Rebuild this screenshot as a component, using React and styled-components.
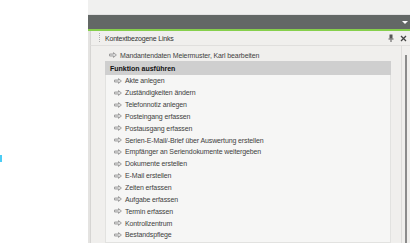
import React from 'react';
import styled, { createGlobalStyle } from 'styled-components';

const GlobalStyle = createGlobalStyle`
  html, body {
    margin: 0;
    padding: 0;
    background: #ffffff;
    overflow: hidden;
  }
  body {
    font-family: "Liberation Sans", Arial, sans-serif;
  }
`;

const Page = styled.div`
  display: flex;
  width: 410px;
  height: 243px;
`;

const LeftBlank = styled.div`
  width: 88px;
  flex: none;
  padding-top: 155px;
  box-sizing: border-box;
`;

const Marker = styled.div`
  width: 2px;
  height: 7px;
  background: #4ccdf5;
`;

const Dock = styled.div`
  flex: 1;
  display: flex;
  flex-direction: column;
  min-width: 0;
`;

const TopStrip = styled.div`
  height: 15px;
  background: #f0f0ef;
  border-bottom: 1px solid #e2e2e2;
  box-sizing: border-box;
`;

const TitleBar = styled.div`
  height: 14px;
  background: #636866;
  display: flex;
  align-items: center;
  justify-content: flex-end;
  padding-right: 2px;
`;

const DropArrow = styled.div`
  width: 0;
  height: 0;
  border-left: 3px solid transparent;
  border-right: 3px solid transparent;
  border-top: 3px solid #ffffff;
  margin-top: 1px;
`;

const GreenLine = styled.div`
  height: 2px;
  background: #86cf4c;
`;

const Panel = styled.div`
  flex: 1;
  display: flex;
  flex-direction: column;
  background: #f0efed;
  border-left: 2px solid #e4e3e1;
  min-height: 0;
`;

const PanelHeader = styled.div`
  height: 14px;
  display: flex;
  align-items: center;
  padding-left: 8px;
  padding-right: 3px;
  border-bottom: 1px solid #e0dfdd;
  border-left: 1px solid #d6d5d3;
`;

const Grip = styled.div`
  width: 1px;
  height: 10px;
  margin-right: 5px;
  background-image: linear-gradient(#b0b0b0 50%, transparent 50%);
  background-size: 1px 2px;
`;

const HeaderTitle = styled.div`
  flex: 1;
  font-size: 7px;
  color: #333333;
  letter-spacing: -0.2px;
  padding-top: 1px;
`;

const HeaderIcon = styled.div`
  width: 8px;
  height: 8px;
  margin-left: 4px;
  display: flex;
  align-items: center;
  justify-content: center;
`;

const Body = styled.div`
  flex: 1;
  display: flex;
  min-height: 0;
  border-left: 1px solid #d6d5d3;
`;

const Content = styled.div`
  flex: 1;
  padding-left: 16px;
  padding-top: 3px;
  padding-right: 10px;
  display: flex;
  flex-direction: column;
  min-width: 0;
`;

const ScrollTrack = styled.div`
  width: 9px;
  flex: none;
  border-left: 1px solid #dedddb;
  padding-top: 9px;
  display: flex;
  justify-content: flex-end;
  padding-right: 3px;
  box-sizing: border-box;
`;

const ScrollThumb = styled.div`
  width: 2px;
  flex: none;
  height: 100%;
  background: #8c8c8c;
`;

const LinkRow = styled.div`
  display: flex;
  align-items: center;
  height: 12px;
  padding-left: ${p => p.$indent || 0}px;
  font-size: 7px;
  color: #3f3f3f;
  letter-spacing: -0.12px;
  white-space: nowrap;
`;

const ArrowWrap = styled.span`
  width: 8px;
  height: 6px;
  margin-right: 3px;
  display: inline-flex;
`;

const Group = styled.div`
  margin-left: -2px;
  display: flex;
  flex-direction: column;
  flex: 1;
`;

const GroupHeader = styled.div`
  height: 14px;
  background: #cfcfcf;
  display: flex;
  align-items: center;
  padding-left: 5px;
  font-size: 7px;
  font-weight: bold;
  color: #111111;
`;

const GroupList = styled.div`
  flex: 1;
  background: #f6f6f5;
  border: 1px solid #e2e2e0;
  border-top: none;
  display: flex;
  flex-direction: column;
`;

const ItemRow = styled(LinkRow)`
  height: 11.85px;
  padding-left: 8px;
`;

const Arrow = () => (
  <ArrowWrap>
    <svg width="8" height="6" viewBox="0 0 8 6">
      <path
        d="M0.5 2 H4.5 V0.6 L7.4 3 L4.5 5.4 V4 H0.5 Z"
        fill="#dcdcdc"
        stroke="#909090"
        strokeWidth="0.8"
        strokeLinejoin="round"
      />
    </svg>
  </ArrowWrap>
);

const PinIcon = () => (
  <svg width="6" height="8" viewBox="0 0 6 8">
    <rect x="1.5" y="0.5" width="3" height="4" fill="#555" />
    <rect x="0.5" y="4.5" width="5" height="1" fill="#555" />
    <rect x="2.5" y="5.5" width="1" height="2.5" fill="#555" />
  </svg>
);

const CloseIcon = () => (
  <svg width="7" height="7" viewBox="0 0 7 7">
    <path d="M1 1 L6 6 M6 1 L1 6" stroke="#444" strokeWidth="1.3" />
  </svg>
);

const items = [
  'Akte anlegen',
  'Zuständigkeiten ändern',
  'Telefonnotiz anlegen',
  'Posteingang erfassen',
  'Postausgang erfassen',
  'Serien-E-Mail/-Brief über Auswertung erstellen',
  'Empfänger an Seriendokumente weitergeben',
  'Dokumente erstellen',
  'E-Mail erstellen',
  'Zeiten erfassen',
  'Aufgabe erfassen',
  'Termin erfassen',
  'Kontrollzentrum',
  'Bestandspflege',
];

const App = () => {
  return (
    <>
      <GlobalStyle />
      <Page>
        <LeftBlank>
          <Marker />
        </LeftBlank>
        <Dock>
          <TopStrip />
          <TitleBar>
            <DropArrow />
          </TitleBar>
          <GreenLine />
          <Panel>
            <PanelHeader>
              <Grip />
              <HeaderTitle>Kontextbezogene Links</HeaderTitle>
              <HeaderIcon>
                <PinIcon />
              </HeaderIcon>
              <HeaderIcon>
                <CloseIcon />
              </HeaderIcon>
            </PanelHeader>
            <Body>
              <Content>
                <LinkRow $indent={2}>
                  <Arrow />
                  Mandantendaten Meiermuster, Karl bearbeiten
                </LinkRow>
                <Group>
                  <GroupHeader>Funktion ausführen</GroupHeader>
                  <GroupList>
                    {items.map(label => (
                      <ItemRow key={label}>
                        <Arrow />
                        {label}
                      </ItemRow>
                    ))}
                  </GroupList>
                </Group>
              </Content>
              <ScrollTrack>
                <ScrollThumb />
              </ScrollTrack>
            </Body>
          </Panel>
        </Dock>
      </Page>
    </>
  );
};

export default App;
